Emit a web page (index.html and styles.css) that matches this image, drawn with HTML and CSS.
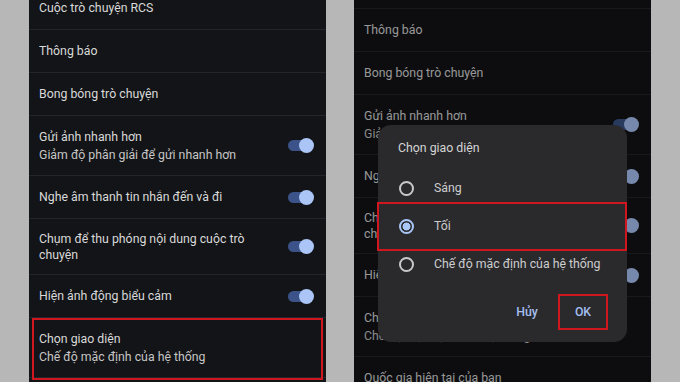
FILE: index.html
```html
<!DOCTYPE html>
<html lang="vi">
<head>
<meta charset="utf-8">
<title>Chọn giao diện</title>
<link rel="stylesheet" href="styles.css">
</head>
<body>
<main class="stage">
  <section class="phone">
    <ul class="list list-left">
      <li class="row"><span class="title">Cuộc trò chuyện RCS</span></li>
      <li class="row"><span class="title">Thông báo</span></li>
      <li class="row"><span class="title">Bong bóng trò chuyện</span></li>
      <li class="row two">
        <div class="text"><span class="title">Gửi ảnh nhanh hơn</span><span class="sub">Giảm độ phân giải để gửi nhanh hơn</span></div>
        <span class="toggle"></span>
      </li>
      <li class="row"><span class="title">Nghe âm thanh tin nhắn đến và đi</span><span class="toggle"></span></li>
      <li class="row wrap">
        <span class="title">Chụm để thu phóng nội dung cuộc trò chuyện</span>
        <span class="toggle"></span>
      </li>
      <li class="row"><span class="title">Hiện ảnh động biểu cảm</span><span class="toggle"></span></li>
      <li class="row two marked">
        <div class="text"><span class="title">Chọn giao diện</span><span class="sub">Chế độ mặc định của hệ thống</span></div>
      </li>
      <li class="row"><span class="title">Quốc gia hiện tại của bạn</span></li>
    </ul>
  </section>

  <section class="phone">
    <ul class="list list-right">
      <li class="row"><span class="title">Cuộc trò chuyện RCS</span></li>
      <li class="row"><span class="title">Thông báo</span></li>
      <li class="row"><span class="title">Bong bóng trò chuyện</span></li>
      <li class="row two">
        <div class="text"><span class="title">Gửi ảnh nhanh hơn</span><span class="sub">Giảm độ phân giải để gửi nhanh hơn</span></div>
        <span class="toggle"></span>
      </li>
      <li class="row"><span class="title">Nghe âm thanh tin nhắn đến và đi</span><span class="toggle"></span></li>
      <li class="row wrap">
        <span class="title">Chụm để thu phóng nội dung cuộc trò chuyện</span>
        <span class="toggle"></span>
      </li>
      <li class="row"><span class="title">Hiện ảnh động biểu cảm</span><span class="toggle"></span></li>
      <li class="row two">
        <div class="text"><span class="title">Chọn giao diện</span><span class="sub">Chế độ mặc định của hệ thống</span></div>
      </li>
      <li class="row"><span class="title">Quốc gia hiện tại của bạn</span></li>
    </ul>
    <div class="scrim"></div>
    <div class="dialog" role="dialog">
      <h2 class="dialog-title">Chọn giao diện</h2>
      <ul class="options">
        <li class="option"><span class="radio"></span><span class="label">Sáng</span></li>
        <li class="option marked"><span class="radio checked"></span><span class="label">Tối</span></li>
        <li class="option"><span class="radio"></span><span class="label">Chế độ mặc định của hệ thống</span></li>
      </ul>
      <div class="actions">
        <button class="btn">Hủy</button>
        <button class="btn marked">OK</button>
      </div>
    </div>
  </section>
</main>
</body>
</html>
```

FILE: styles.css
```css
* { box-sizing: border-box; }

html, body {
  margin: 0;
  padding: 0;
  background: #b7b7b7;
}

body {
  font-family: Roboto, "Noto Sans", "Liberation Sans", sans-serif;
  font-size: 12.3px;
}

.stage {
  display: flex;
  gap: 28px;
  padding-left: 29px;
  height: 382px;
  overflow: hidden;
}

.phone {
  position: relative;
  width: 297px;
  height: 382px;
  background: #131417;
  overflow: hidden;
}

.list {
  list-style: none;
  margin: 0;
  padding: 0;
}

.list-left { margin-top: -13px; }
.list-right { margin-top: -34px; }

.row {
  position: relative;
  display: flex;
  align-items: center;
  justify-content: space-between;
  gap: 16px;
  height: 43px;
  padding: 0 12px 0 10px;
  border-bottom: 1px solid #23252a;
  color: #d9d9d9;
}

.row.two { height: 60px; }
.row.wrap { height: 56px; }
.row.wrap .title { line-height: 16px; max-width: 212px; }

.text {
  display: flex;
  flex-direction: column;
}

.title { line-height: 18px; }
.sub { line-height: 18px; color: #c6c6c6; }

.toggle {
  position: relative;
  flex: none;
  width: 26px;
  height: 15px;
}

.toggle::before {
  content: "";
  position: absolute;
  left: 0;
  top: 2px;
  width: 22px;
  height: 11px;
  border-radius: 6px;
  background: #3b5388;
}

.toggle::after {
  content: "";
  position: absolute;
  right: 0;
  top: 0;
  width: 15px;
  height: 15px;
  border-radius: 50%;
  background: #aac5f6;
}

.row.marked::after {
  content: "";
  position: absolute;
  left: 3px;
  right: 3px;
  top: 0;
  bottom: -3px;
  border: 2px solid #d0171f;
}

.scrim {
  position: absolute;
  inset: 0;
  background: rgba(0, 0, 0, 0.3);
}

.dialog {
  position: absolute;
  left: 24px;
  top: 125px;
  width: 249px;
  height: 217px;
  padding: 14px 0 12px;
  border-radius: 13px;
  background: #2a2a2d;
  color: #cfcfcf;
}

.dialog-title {
  margin: 0;
  padding-left: 20px;
  font-size: 12.3px;
  font-weight: 400;
  line-height: 18px;
  color: #d6d6d6;
}

.options {
  list-style: none;
  margin: 12px 0 0;
  padding: 0;
}

.option {
  position: relative;
  display: flex;
  align-items: center;
  gap: 20px;
  height: 38px;
  padding-left: 21px;
}

.option.marked::after {
  content: "";
  position: absolute;
  left: -1px;
  right: 0;
  top: -5px;
  bottom: -6px;
  border: 2px solid #d0171f;
}

.radio {
  flex: none;
  width: 15px;
  height: 15px;
  border-radius: 50%;
  border: 2px solid #c9c9c9;
}

.radio.checked {
  border-color: #a9c5f6;
  background: radial-gradient(circle, #a9c5f6 0 3.8px, transparent 4.2px);
}

.label { color: #cdcdcd; }

.actions {
  display: flex;
  justify-content: flex-end;
  align-items: center;
  gap: 11px;
  margin-top: 11px;
  padding-right: 19px;
}

.btn {
  position: relative;
  width: 40px;
  height: 36px;
  padding: 0;
  border: 0;
  background: none;
  font: 500 12.3px Roboto, "Noto Sans", sans-serif;
  color: #a4bff0;
}

.btn.marked {
  width: 50px;
  border: 2px solid #d0171f;
}
```
